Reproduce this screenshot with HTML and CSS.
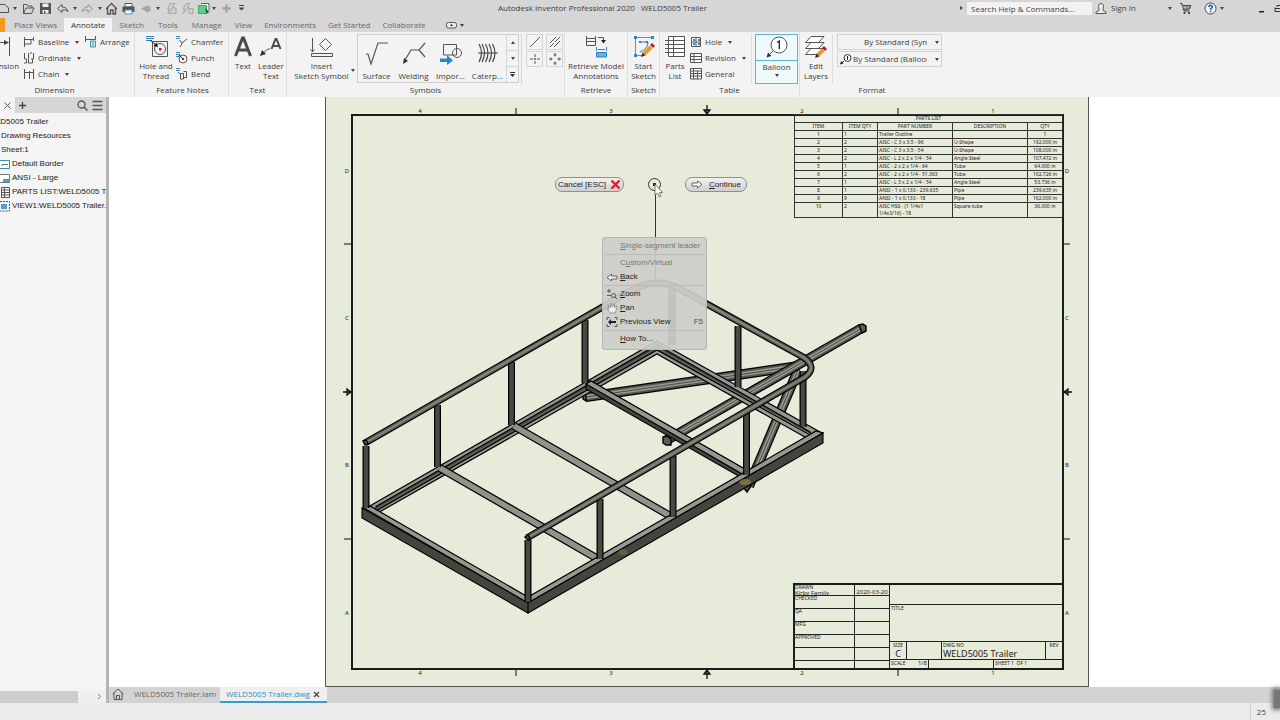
FILE: index.html
```html
<!DOCTYPE html>
<html lang="en">
<head>
<meta charset="utf-8">
<title>Autodesk Inventor Professional 2020</title>
<link rel="stylesheet" href="styles.css">
</head>
<body>
<header class="titlebar">
  <div class="quick">
    <button class="q q-new" aria-label="New"><svg width="10" height="14" viewBox="0 0 10 14"><path class="ln" d="M0 3.500H5L8.500 7V11.500H0"/></svg></button>
    <button class="q q-caret" aria-label="New options"><i class="caret"></i></button>
    <button class="q" aria-label="Open"><svg width="13" height="13" viewBox="0 0 13 13"><path class="ln" d="M1.500 11.500V2.500H5L6 4H10V6M1.500 11.500L4 6H12L9.500 11.500Z"/></svg></button>
    <button class="q" aria-label="Save"><svg width="13" height="13" viewBox="0 0 13 13"><path fill="#555" d="M1 1H12V12H1Z"/><path fill="#eee" d="M3.500 1.500H9.500V5H3.500ZM3.500 8H9.500V11.500H3.500Z"/><path fill="#555" d="M5 9H6.500V11.500H5Z"/></svg></button>
    <button class="q" aria-label="Undo"><svg width="13" height="13" viewBox="0 0 13 13"><path class="ln" d="M6 2.500L1.500 6.500L6 10.500V8Q10 7 12 9.500Q11 5 6 5Z"/></svg></button>
    <button class="q q-c8" aria-label="Undo options"><i class="caret"></i></button>
    <button class="q dim" aria-label="Redo"><svg width="13" height="13" viewBox="0 0 13 13"><path class="ln" d="M7 2.500L11.500 6.500L7 10.500V8Q3 7 1 9.500Q2 5 7 5Z"/></svg></button>
    <button class="q q-c7" aria-label="Redo options"><i class="caret"></i></button>
    <button class="q" aria-label="Home"><svg width="13" height="13" viewBox="0 0 13 13"><path class="ln" stroke-width="1.400" d="M1 7L6.500 1.500L12 7M2.500 6V12H5.500V8H8V12H10.500V6"/></svg></button>
    <button class="q" aria-label="Print"><svg width="13" height="13" viewBox="0 0 13 13"><path fill="#fff" stroke="#555" d="M3 1.500H10V5H3Z"/><path fill="#555" d="M.5 4.500H12.500V10H.5Z"/><path fill="#fff" stroke="#3d93c4" d="M3 8H10V12H3Z"/></svg></button>
    <button class="q dim" aria-label="Return"><svg width="13" height="13" viewBox="0 0 13 13"><path fill="#777" d="M2 7L5 5L9 3.500L11.500 5V9L8 10.500L5 8Z"/></svg></button>
    <button class="q q-c8" aria-label="Return options"><i class="caret"></i></button>
    <button class="q dim" aria-label="Update"><svg width="13" height="13" viewBox="0 0 13 13"><path fill="#ccc" stroke="#777" d="M6 1.500H11L8 5H10L4 11.500L5.500 7H3.500ZM5 11.500H12V6H10"/></svg></button>
    <button class="q dim" aria-label="Update all"><svg width="13" height="13" viewBox="0 0 13 13"><path fill="#ccc" stroke="#777" d="M5 1.500H9L6 5H8L2 11.500L4 7H2ZM8 6.500H12V11.500H8Z"/></svg></button>
    <button class="q q-sel" aria-label="Select"><svg width="13" height="13" viewBox="0 0 13 13"><path fill="#fff" stroke="#39734c" d="M4 1.500H12V9"/><path fill="#5fce86" stroke="#41a568" d="M1.500 3.500H9.500V11.500H1.500Z"/><path fill="#333" d="M8 6L12.500 10.500H10.500L10 12.500Z"/></svg></button>
    <button class="q q-c8" aria-label="Select options"><i class="caret"></i></button>
    <button class="q dim" aria-label="Add"><svg width="13" height="13" viewBox="0 0 13 13"><path stroke="#777" stroke-width="2.500" d="M6.500 2.500V10.500M2.500 6.500H10.500"/></svg></button>
    <button class="q q-more" aria-label="Customize"><svg width="7" height="7" viewBox="0 0 7 7"><path fill="#444" d="M1 0H6V1H1ZM.5 2.500H6.500L3.500 5.500Z"/></svg></button>
  </div>
  <h1 class="apptitle"><span>Autodesk Inventor Professional 2020</span><span>WELD5005 Trailer</span></h1>
  <div class="account">
    <i class="rcaret"></i>
    <input class="search" type="text" aria-label="Search" placeholder="Search Help &amp; Commands...">
    <button class="signin"><svg width="12" height="13" viewBox="0 0 12 13"><path fill="#eee" stroke="#555" d="M4 7Q2.500 2 6 1.500Q9.500 2 8 7V8.500L11 10V11.500H1V10L4 8.500Z"/></svg>Sign In</button>
    <button class="q q-acc" aria-label="Account options"><i class="caret"></i></button>
    <button class="q q-cart" aria-label="Store"><svg width="13" height="13" viewBox="0 0 13 13"><path fill="#999" stroke="#445" d="M1 1.500H3L5 9H10.500M3.500 3.500H12L10.500 7H4.500"/><path fill="#445" d="M4.500 10H6.500V12H4.500ZM9 10H11V12H9Z"/></svg></button>
    <button class="q q-help" aria-label="Help"><svg width="13" height="13" viewBox="0 0 13 13"><circle cx="6.500" cy="6.500" r="5.500" fill="#f4f6fa" stroke="#446"/><path fill="none" stroke="#2456a8" stroke-width="1.500" d="M4.700 5Q5 3.300 6.500 3.300Q8.300 3.400 8.300 5Q8 6 6.600 6.800V7.800M6.600 8.800V10.200"/></svg></button>
    <button class="q q-c8" aria-label="Help options"><i class="caret"></i></button>
    <button class="q q-min" aria-label="Minimize"><svg width="7" height="10" viewBox="0 0 7 10"><path fill="#222" d="M1 8H6V9.500H1Z"/></svg></button>
    <button class="q q-rest" aria-label="Restore"><svg width="6" height="10" viewBox="0 0 6 10"><path fill="none" stroke="#333" d="M1 5.500H6M1 4.500V8.500H6M3 4V2.500H6"/></svg></button>
  </div>
</header>

<nav class="tabs">
  <button class="file-tab" aria-label="File"></button>
  <button class="tab">Place Views</button>
  <button class="tab on">Annotate</button>
  <button class="tab">Sketch</button>
  <button class="tab">Tools</button>
  <button class="tab">Manage</button>
  <button class="tab slim">View</button>
  <button class="tab slim">Environments</button>
  <button class="tab slim">Get Started</button>
  <button class="tab slim">Collaborate</button>
  <button class="tab tab-min" aria-label="Minimize ribbon"><svg width="11" height="7" viewBox="0 0 11 7"><rect x=".5" y=".5" width="10" height="5.500" rx="2" fill="#eee" stroke="#555"/><path fill="#222" d="M4 4H7L5.500 2Z"/></svg><i class="caret"></i></button>
</nav>

<section class="ribbon">
  <div class="group g-dim">
    <div class="body">
      <button class="big b-dim"><svg width="36" height="25" viewBox="0 0 36 25"><path class="ln" d="M28.500 3V22M4.500 3V22M5 8.500H27"/><path fill="#444" d="M28 8.500L23 6V11Z"/></svg><span>Dimension</span></button>
      <div class="rows r-dim">
        <button class="row"><svg width="12" height="12" viewBox="0 0 12 12"><path class="ln" d="M1.500 1V11M1.500 3.500H11M1.500 8H8V3.500M10.500 1V5"/></svg><span>Baseline</span><i class="caret"></i></button>
        <button class="row"><svg width="12" height="12" viewBox="0 0 12 12"><path class="ln" d="M1.500 1V7H3.500V11H1M5.500 1V11H9.500V7M10.500 1V7H8M7 1H9"/></svg><span>Ordinate</span><i class="caret"></i></button>
        <button class="row"><svg width="12" height="12" viewBox="0 0 12 12"><path class="ln" d="M1.500 1V11M6.500 3V11M10.500 1V11M1.500 4.500H10.500"/></svg><span>Chain</span><i class="caret"></i></button>
      </div>
      <div class="rows">
        <button class="row"><svg width="13" height="12" viewBox="0 0 13 12"><path class="ln" d="M1.500 0V6M1.500 3.500H11.500V0"/><path fill="#d9eef5" stroke="#3a8fae" d="M6.500 5H11.500V11H6.500Z"/><path stroke="#3a8fae" d="M8 7H10M8 9H10"/></svg><span>Arrange</span></button>
      </div>
    </div>
    <h2>Dimension</h2>
  </div>
  <div class="group g-feat">
    <div class="body">
      <button class="big b-hole"><svg width="25" height="25" viewBox="0 0 25 25"><path stroke="#2f86bd" d="M2 2.500H10M2 4.500H10M2 6.500H8"/><path class="ln" d="M8.500 7.500H23.500V22.500H8.500Z"/><circle class="ln" cx="16" cy="15" r="5.500"/><path fill="#c11" d="M15 14H17.500V16.500H15Z"/><path stroke="#222" d="M6 6L13 12"/><path fill="#111" d="M14 13L9.500 12L12.500 8.500Z"/></svg><span>Hole and Thread</span></button>
      <div class="rows">
        <button class="row"><svg width="13" height="12" viewBox="0 0 13 12"><path stroke="#2f86bd" d="M1 .5H5M1 2.500H5"/><path class="ln" d="M4.500 4L7 7M5 11L8 6L12 3"/></svg><span>Chamfer</span></button>
        <button class="row"><svg width="13" height="12" viewBox="0 0 13 12"><path stroke="#2f86bd" d="M1 .5H5M1 2.500H5M1 4.500H4"/><circle class="ln" cx="8" cy="7" r="4"/><path stroke="#222" d="M4 3L7 6"/><path fill="#c11" d="M7 6H9V8H7Z"/></svg><span>Punch</span></button>
        <button class="row"><svg width="13" height="12" viewBox="0 0 13 12"><path stroke="#2f86bd" d="M1 .5H5M1 2.500H5"/><path class="ln" d="M5.500 5.500H8.500V11H5.500ZM8.500 3.500H11.500V9.500H8.500M3 4L6 7"/></svg><span>Bend</span></button>
      </div>
    </div>
    <h2>Feature Notes</h2>
  </div>
  <div class="group g-text">
    <div class="body">
      <button class="big b-text"><svg width="20" height="25" viewBox="0 0 20 25"><path fill="none" stroke="#4a4a4a" stroke-width="3" d="M2.500 22L9.500 4H10.500L17.500 22M5.500 16H14.500"/></svg><span>Text</span></button>
      <button class="big b-lead"><svg width="24" height="25" viewBox="0 0 24 25"><path fill="none" stroke="#4a4a4a" stroke-width="2" d="M12.500 15L16.500 5H17.500L21.500 15M14 12H20"/><path class="ln" d="M3 20L9 15H11"/><path fill="#333" d="M1 22L3 16L7 20Z"/></svg><span>Leader Text</span></button>
    </div>
    <h2>Text</h2>
  </div>
  <div class="group g-sym">
    <div class="body">
      <button class="big b-ins"><svg width="26" height="25" viewBox="0 0 26 25"><path class="ln" d="M3.500 4V18M1.500 15.500L3.500 18L5.500 15.500M2.500 19.500H23.500V22.500H2.500ZM16.500 4.500L22.500 10.500L16.500 16.500L10.500 10.500Z"/></svg><span>Insert<br>Sketch Symbol</span><i class="caret"></i></button>
      <div class="gallery">
        <button class="gi"><svg width="24" height="26" viewBox="0 0 24 26"><path fill="none" stroke="#555" stroke-width="1.200" d="M1 14H3L6 24L13 3H23"/></svg><span>Surface</span></button>
        <button class="gi"><svg width="24" height="26" viewBox="0 0 24 26"><path fill="none" stroke="#555" stroke-width="1.200" d="M3 20L9 10H17L23 3M17 10L23 17"/><path fill="#333" d="M1 24L2 18L6 21Z"/></svg><span>Welding</span></button>
        <button class="gi"><svg width="24" height="26" viewBox="0 0 24 26"><path class="ln" d="M4.500 4.500H17.500V15H4.500Z"/><circle class="ln" cx="18" cy="13" r="4.500"/><path fill="#2688cf" d="M1 18.500H8V15L14 20.500L8 25V22H1Z"/></svg><span>Impor...</span></button>
        <button class="gi"><svg width="24" height="26" viewBox="0 0 24 26"><path fill="none" stroke="#444" stroke-width="1.200" d="M3 4Q8 13 3 22M6 4Q11 13 6 22M9.500 4Q14.500 13 9.500 22M13 4Q18 13 13 22M16.500 4Q21.500 13 16.500 22M2 13H22"/></svg><span>Caterp...</span></button>
        <div class="gscroll">
          <button aria-label="Up"><i class="caret up"></i></button>
          <button aria-label="Down"><i class="caret"></i></button>
          <button aria-label="More"><svg width="5" height="5" viewBox="0 0 5 5"><path fill="#333" d="M0 0H5V1H0ZM0 2H5L2.500 5Z"/></svg></button>
        </div>
      </div>
      <div class="marks">
        <button aria-label="Centerline"><svg width="12" height="12" viewBox="0 0 12 12"><path class="ln" d="M1 11L11 1"/></svg></button>
        <button aria-label="Bisector"><svg width="12" height="12" viewBox="0 0 12 12"><path class="ln" d="M1 7L7 1M1 11L5 7M6 6L11 1M5 11L11 5"/></svg></button>
        <button aria-label="Center mark"><svg width="12" height="12" viewBox="0 0 12 12"><path class="ln" d="M6 1V4M6 5V7M6 8V11M1 6H4M5 6H7M8 6H11"/></svg></button>
        <button aria-label="Centered pattern"><svg width="12" height="12" viewBox="0 0 12 12"><path class="ln" d="M6 0V3.500M4.500 2H7.500M6 8.500V12M4.500 10H7.500M2 4.500V7.500M0 6H3.500M10 4.500V7.500M8.500 6H12"/></svg></button>
      </div>
    </div>
    <h2>Symbols</h2>
  </div>
  <div class="group g-ret">
    <div class="body">
      <button class="big"><svg width="24" height="25" viewBox="0 0 24 25"><path class="ln" d="M2.500 2V11.500H11.500V2M2 7.500H12M3 4.500H11M14 3.500H19.500V7"/><path fill="#222" d="M17 6H22L19.500 9.500Z"/><path fill="#67b1df" stroke="#2783bd" d="M12.500 18.500H22.500V23H12.500ZM12.500 13V17M22.500 13V17M14 15.500H21"/></svg><span>Retrieve Model Annotations</span></button>
    </div>
    <h2>Retrieve</h2>
  </div>
  <div class="group g-sk">
    <div class="body">
      <button class="big"><svg width="24" height="25" viewBox="0 0 24 25"><path fill="none" stroke="#888" d="M3.500 4V20M4 3.500H19M4 21.500H10"/><path fill="#2688cf" d="M2 2H5V5H2ZM19 2H22V5H19ZM2 20H5V23H2ZM7 7H9V9H7ZM14 7H16V9H14Z"/><path fill="none" stroke="#3477a2" d="M8 8H16Q16 15 8 18"/><path stroke="#e99a28" stroke-width="4" d="M12 20L19 13"/><path fill="#b22" d="M18 11L21 14L23 12L20 9Z"/><path fill="#333" d="M9 23L10.500 18.500L13.500 21.500Z"/></svg><span>Start Sketch</span></button>
    </div>
    <h2>Sketch</h2>
  </div>
  <div class="group g-tab">
    <div class="body">
      <button class="big b-parts"><svg width="22" height="25" viewBox="0 0 22 25"><path class="ln" fill="#fff" d="M4.500 2.500H20.500V22.500H4.500ZM4.500 6.500H20.500M4.500 10.500H20.500M4.500 14.500H20.500M4.500 18.500H20.500M9.500 2.500V22.500M1 6.500H4M1 10.500H4M1 14.500H4M1 18.500H4"/></svg><span>Parts List</span></button>
      <div class="rows">
        <button class="row"><svg width="12" height="12" viewBox="0 0 12 12"><path class="ln" fill="#fff" d="M1.500 1.500H10.500V10.500H1.500ZM1.500 6H10.500M6 1.500V10.500"/><path fill="#2f86bd" d="M3 3H5V5H3ZM8 3H10V5H8ZM3 7H5V9H3ZM8 7H10V9H8Z"/></svg><span>Hole</span><i class="caret"></i></button>
        <button class="row"><svg width="12" height="12" viewBox="0 0 12 12"><path class="ln" fill="#fff" d="M.5 1.500H11.500V10.500H.5ZM.5 4.500H11.500M.5 7.500H11.500M4 1.500V10.500"/></svg><span>Revision</span><i class="caret"></i></button>
        <button class="row"><svg width="12" height="12" viewBox="0 0 12 12"><path class="ln" fill="#fff" d="M.5 .5H11.500V11H.5ZM.5 3H11.500M.5 5.500H11.500M.5 8H11.500M3.500 .5V11M7.500 3V11"/></svg><span>General</span></button>
      </div>
      <button class="balloon"><span class="bic"><svg width="24" height="24" viewBox="0 0 24 24"><circle cx="14" cy="10" r="8" fill="#fff" stroke="#555"/><path fill="none" stroke="#333" stroke-width="1.400" d="M12 7.500L14.300 6V14"/><path stroke="#555" d="M8 16L4 20"/><path fill="#333" d="M1.500 22.500L3 17.500L6.500 21Z"/></svg></span><span>Balloon</span><i class="caret"></i></button>
    </div>
    <h2>Table</h2>
  </div>
  <div class="group g-fmt">
    <div class="body">
      <button class="big b-edit"><svg width="24" height="25" viewBox="0 0 24 25"><path class="ln" fill="#fff" d="M1.500 20.500L7 14.500H20L14.500 20.500ZM1.500 14.500L7 8.500H20L14.500 14.500ZM1.500 8.500L7 2.500H20L14.500 8.500Z"/><path stroke="#e99a28" stroke-width="4" d="M14 21L19 16"/><path fill="#b22" d="M18 14L21 17L23 15L20 12Z"/><path fill="#333" d="M11 24L12.500 19.500L15.500 22.500Z"/></svg><span>Edit Layers</span></button>
      <div class="styles">
        <label class="pick p-one"><select aria-label="Object style"><option>By Standard (Symbol)</option></select><i class="caret"></i></label>
        <label class="pick p-two"><svg width="12" height="12" viewBox="0 0 12 12"><circle cx="7.500" cy="5" r="3.500" fill="#fff" stroke="#333"/><path stroke="#222" d="M7.500 3V7M4 8L2 10"/><path fill="#222" d="M0 11.500L1 8L3.500 10.500Z"/></svg><select aria-label="Layer style"><option>By Standard (Balloon)</option></select><i class="caret"></i></label>
      </div>
    </div>
    <h2>Format</h2>
  </div>
</section>

<div class="work">
  <aside class="browser">
    <div class="bhead">
      <button class="btab" aria-label="Close panel"><svg width="9" height="9" viewBox="0 0 9 9"><path stroke="#555" d="M1.500 1.500L7.500 7.500M7.500 1.500L1.500 7.500"/></svg></button>
      <button class="badd" aria-label="Add panel"><svg width="9" height="9" viewBox="0 0 9 9"><path stroke="#444" stroke-width="1.300" d="M4.500 1V8M1 4.500H8"/></svg></button>
      <button class="bicon" aria-label="Find"><svg width="11" height="11" viewBox="0 0 11 11"><circle cx="4.500" cy="4.500" r="3.500" fill="none" stroke="#555" stroke-width="1.300"/><path stroke="#555" stroke-width="1.500" d="M7 7L10.500 10.500"/></svg></button>
      <button class="bicon" aria-label="Panel menu"><svg width="11" height="11" viewBox="0 0 11 11"><path stroke="#555" stroke-width="1.300" d="M.5 1.500H10.500M.5 5.500H10.500M.5 9.500H10.500"/></svg></button>
    </div>
    <ul class="tree">
      <li class="t0">WELD5005 Trailer</li>
      <li>Drawing Resources</li>
      <li>Sheet:1</li>
      <li><svg width="11" height="11" viewBox="0 0 11 11"><path fill="#fff" stroke="#3a8fae" d="M-1 1.500H9.500V9.500H-1"/><path fill="none" stroke="#777" d="M2 7V5.500H8"/></svg>Default Border</li>
      <li><svg width="11" height="11" viewBox="0 0 11 11"><path fill="#fff" stroke="#777" d="M-1 1.500H9.500V9.500H-1"/><path fill="#4c9fd0" d="M3 6H9V9H3Z"/></svg>ANSI - Large</li>
      <li><svg width="11" height="11" viewBox="0 0 11 11"><path class="ln" fill="#fff" d="M1.500 .5H9.500V10.500H1.500ZM1.500 3H9.500M1.500 5.500H9.500M1.500 8H9.500M4.500 .5V10.500"/></svg>PARTS LIST:WELD5005 Trailer</li>
      <li><svg width="11" height="11" viewBox="0 0 11 11"><path fill="none" stroke="#555" stroke-dasharray="2 1" d="M0 .5H9.500V10H0"/><path fill="#4c9fd0" d="M1 3H7V8H1Z"/></svg>VIEW1:WELD5005 Trailer.iam</li>
    </ul>
    <div class="hbar"><i class="thumb"></i><span class="harrow"><svg width="5" height="7" viewBox="0 0 5 7"><path fill="none" stroke="#777" d="M1 1L3.500 3.500L1 6"/></svg></span></div>
  </aside>

  <main class="view">
    <div class="canvas">
      <div class="sheet">
        <svg class="drawing" viewBox="326 97 762 589">
          <defs>
            <path id="pipe" d="M365 443L634 289Q656 278 676 287L803 357Q818 367 805 377L527 538"/>
            <path id="tongue" d="M667 440L862 328"/>
            <path id="brace1" d="M586 397L799 366"/>
            <path id="brace2" d="M749 486L798 370"/>
            <path id="posts" d="M366 446V508M437.500 405V467M511.500 362V425M585 320V383M672 289V345M738 326V387M803 371V427M528 540V602M600 499V559M673 456V517M746.500 413V475"/>
            <path id="cross" d="M440 468L598 559M514 426L672 517"/>
          </defs>
          <g class="zone">
            <path d="M516 108V114M898 108V114M516 670V676M898 670V676M344 244H351M344 539H351M1064 244H1070M1064 539H1070"/>
            <path class="arr" d="M707 105V114M704 110L707 114L710 110ZM707 679V670M704 674L707 670L710 674ZM343 392H351M347 389L351 392L347 395ZM1072 392H1064M1068 389L1064 392L1068 395Z"/>
            <g text-anchor="middle">
              <text x="420" y="113">4</text><text x="611" y="113">3</text><text x="802" y="113">2</text><text x="993" y="113">1</text>
              <text x="420" y="675">4</text><text x="611" y="675">3</text><text x="802" y="675">2</text><text x="993" y="675">1</text>
              <text x="347" y="173">D</text><text x="347" y="320">C</text><text x="347" y="467">B</text><text x="347" y="615">A</text>
              <text x="1067" y="173">D</text><text x="1067" y="320">C</text><text x="1067" y="467">B</text><text x="1067" y="615">A</text>
            </g>
          </g>
          <g fill="none">
            <use href="#brace1" class="k10"/><use href="#brace1" class="dark8"/><use href="#brace1" class="hi3"/><use href="#brace1" class="k1"/>
            <use href="#brace2" class="k10"/><use href="#brace2" class="dark8"/><use href="#brace2" class="hi3"/><use href="#brace2" class="k1"/>
            <use href="#tongue" class="k10"/><use href="#tongue" class="dark8"/><use href="#tongue" class="hi3"/><use href="#tongue" class="k1"/>
          </g>
          <path class="cap" d="M663 437L667 436L671 439V445L666 445L663 443ZM859 325L863 324L866 326V331L862 333ZM743 487L749 484L751 486L747 492ZM583 393L586 396V401L583 399Z"/>
          <path class="lit" d="M368 507L657 341L822 433L812 441L657 354L376 514Z"/>
          <path class="dk" d="M376 506.500L657 345L810 432L812 436L657 350L376 511Z"/>
          <path class="edge" d="M376 509L657 348L812 435"/>
          <path class="dk" d="M586 384L590 381L748 471V480L742 478L586 389Z"/>
          <path class="lit" d="M586 384L591 381L750 472L744 475Z"/>
          <g fill="none"><use href="#cross" class="k9"/><use href="#cross" class="lite6"/></g>
          <path class="lit" d="M364 508L370 506L528 597L816 431L823 433L528 603Z"/>
          <path class="dk" d="M362 508L528 603V613L362 518ZM528 603L823 433V443L528 613Z"/>
          <ellipse class="glow" cx="745" cy="482" rx="6" ry="3"/><ellipse class="glow g2" cx="623" cy="552" rx="5" ry="3"/>
          <g fill="none">
            <use href="#posts" class="k8"/><use href="#posts" class="post5"/>
            <use href="#pipe" class="k8"/><use href="#pipe" class="pipe5"/><use href="#pipe" class="hi2"/>
          </g>
          <path class="cap" d="M363 441L366 440L368 443L365 445ZM525 537L528 535L530 538L528 540Z"/>
          <path class="leader" d="M655.500 186V280"/>
          <circle class="leader" cx="654.500" cy="184.500" r="6"/>
          <path fill="#333" d="M653 183H656V186H653Z"/>
          <path fill="#fff" stroke="#444" stroke-width=".7" d="M655 184V195L657.500 193L659.500 197L661 196L659.500 192.500H662.500Z"/>
        </svg>
        <div class="frame">
          <table class="parts">
            <colgroup><col class="c1"><col class="c2"><col class="c3"><col class="c4"><col class="c5"></colgroup>
            <thead>
              <tr><th colspan="5">PARTS LIST</th></tr>
              <tr><th>ITEM</th><th>ITEM QTY</th><th>PART NUMBER</th><th>DESCRIPTION</th><th>QTY</th></tr>
            </thead>
            <tbody>
              <tr><td>1</td><td>1</td><td>Trailer Outline</td><td></td><td>1</td></tr>
              <tr><td>2</td><td>2</td><td>AISC - C 3 x 3.5 - 96</td><td>U-Shape</td><td>192.000 in</td></tr>
              <tr><td>3</td><td>2</td><td>AISC - C 3 x 3.5 - 54</td><td>U-Shape</td><td>108.000 in</td></tr>
              <tr><td>4</td><td>2</td><td>AISC - L 2 x 2 x 1/4 - 54</td><td>Angle Steel</td><td>107.472 in</td></tr>
              <tr><td>5</td><td>1</td><td>AISC - 2 x 2 x 1/4 - 64</td><td>Tube</td><td>64.000 in</td></tr>
              <tr><td>6</td><td>2</td><td>AISC - 2 x 2 x 1/4 - 51.363</td><td>Tube</td><td>102.726 in</td></tr>
              <tr><td>7</td><td>1</td><td>AISC - L 3 x 2 x 1/4 - 54</td><td>Angle Steel</td><td>53.736 in</td></tr>
              <tr><td>8</td><td>1</td><td>ANSI - 1 x 0.133 - 239.635</td><td>Pipe</td><td>239.635 in</td></tr>
              <tr><td>9</td><td>9</td><td>ANSI - 1 x 0.133 - 18</td><td>Pipe</td><td>162.000 in</td></tr>
              <tr><td>10</td><td>2</td><td>AISC HSS - (1 1/4x1<br>1/4x3/16) - 18</td><td>Square tube</td><td>36.000 in</td></tr>
            </tbody>
          </table>
          <div class="block">
            <div class="signs">
              <div class="sign">DRAWN<b>Kirby Family</b></div><div class="sign date"><b>2020-03-20</b></div>
              <div class="sign">CHECKED</div><div class="sign"></div>
              <div class="sign">QA</div><div class="sign"></div>
              <div class="sign">MFG</div><div class="sign"></div>
              <div class="sign">APPROVED</div><div class="sign"></div>
              <div class="sign"></div><div class="sign"></div>
              <div class="sign"></div><div class="sign"></div>
            </div>
            <div class="info">
              <div class="cell blank"></div>
              <div class="cell ttl">TITLE</div>
              <div class="line l-size">
                <div class="cell sz">SIZE<b>C</b></div><div class="cell code"></div>
                <div class="cell dwg">DWG NO<b>WELD5005 Trailer</b></div><div class="cell rev">REV</div>
              </div>
              <div class="line l-scale">
                <div class="cell scale"><span>SCALE</span><span>1/8</span></div><div class="cell mid"></div><div class="cell sheetno">SHEET 1&nbsp; OF 1</div>
              </div>
            </div>
          </div>
        </div>
        <button class="pill cancel">Cancel [ESC]<svg width="11" height="11" viewBox="0 0 11 11"><path stroke="#d8202c" stroke-width="2.400" d="M1.500 1.500L9.500 9.500M9.500 1.500L1.500 9.500"/></svg></button>
        <button class="pill cont"><svg width="12" height="9" viewBox="0 0 12 9"><path fill="#fff" stroke="#666" d="M1 3H6.500V1L11 4.500L6.500 8V6H1Z"/></svg><span><u>C</u>ontinue</span></button>
        <div class="menu">
          <button class="mi off"><span><u>S</u>ingle-segment leader</span></button>
          <hr>
          <button class="mi off"><span>C<u>u</u>stom/Virtual</span></button>
          <button class="mi"><svg width="12" height="9" viewBox="0 0 12 9"><path fill="#eee" stroke="#666" d="M11 3H5.500V1L1 4.500L5.500 8V6H11Z"/></svg><span><u>B</u>ack</span></button>
          <hr>
          <button class="mi"><svg width="12" height="12" viewBox="0 0 12 12"><path class="ln" d="M3 1V5M1 3H5M1 7.500H5"/><circle class="ln" cx="7.500" cy="7.500" r="2"/><path class="ln" d="M9 9L11 11"/></svg><span><u>Z</u>oom</span></button>
          <button class="mi"><svg width="12" height="12" viewBox="0 0 12 12"><path fill="#eee" stroke="#888" stroke-width=".8" d="M4 11L1 6.500L3 7L2 2.500L4.500 5.500L5 1L6.500 5L8.500 1.500V5.500L11 4L9.500 11Z"/></svg><span><u>P</u>an</span></button>
          <button class="mi"><svg width="12" height="12" viewBox="0 0 12 12"><path class="ln" d="M3.500 1.500H1V4M8.500 1.500H11V4M3.500 10.500H1V8M8.500 10.500H11V8"/><path fill="#222" d="M2 6L5 3V5H10V7H5V9Z"/></svg><span>Previous View</span><kbd>F5</kbd></button>
          <hr>
          <button class="mi"><span><u>H</u>ow To...</span></button>
        </div>
      </div>
    </div>
    <nav class="docs">
      <button class="dhome" aria-label="Home"><svg width="12" height="12" viewBox="0 0 12 12"><path class="ln" d="M.5 6L6 1L11.500 6M2 5V11.500H10V5M4.500 11V7.500H7.500V11"/></svg></button>
      <button class="doc">WELD5005 Trailer.iam</button>
      <button class="doc on">WELD5005 Trailer.dwg<svg width="7" height="7" viewBox="0 0 7 7"><path stroke="#444" stroke-width="1.200" d="M1 1L6 6M6 1L1 6"/></svg></button>
    </nav>
  </main>
</div>
<footer class="status"><span>25</span><i class="grip"></i></footer>
</body>
</html>
```
FILE: styles.css
```css
* { box-sizing: border-box; }
body {
  margin: 0; height: 100vh; display: flex; flex-direction: column; overflow: hidden;
  font: 8px/10px "Open Sans", "Noto Sans", sans-serif; color: #3c3c3c; background: #ebebeb;
}
button { font: inherit; color: inherit; background: none; border: 0; padding: 0; margin: 0; white-space: nowrap; }
svg { display: block; flex: none; overflow: visible; }
h1, h2 { margin: 0; font: inherit; }
.ln { fill: none; stroke: #555; }
path.ln[fill="#fff"] { fill: #fff; }
.caret { display: block; flex: none; width: 0; height: 0; border: 2px solid transparent; border-top: 3px solid #444; border-bottom: 0; }
.caret.up { border-top: 0; border-bottom: 3px solid #444; }

.titlebar { display: flex; height: 16px; flex: none; background: #d6d6d6; align-items: center; }
.quick, .account { display: flex; height: 16px; align-items: center; }
.q { width: 17px; height: 16px; flex: none; display: flex; align-items: center; justify-content: center; }
.q-new { width: 10px; justify-content: flex-start; }
.q-caret { width: 10px; }
.q-c8 { width: 8px; }
.q-c7 { width: 7px; }
.q-sel { width: 14px; }
.q-more { width: 12px; }
.dim { opacity: .5; }
.apptitle { flex: 1; display: flex; justify-content: center; gap: 6px; padding-right: 2px; white-space: nowrap; }
.rcaret { border: 2px solid transparent; border-left: 3px solid #444; border-right: 0; margin: 0 4px 0 0; }
.search { width: 125px; height: 13px; border: 0; background: #f2f2f2; font: inherit; padding: 0 4px; color: #444; }
.search::placeholder { color: #444; opacity: 1; }
.signin { display: flex; align-items: center; gap: 4px; margin-left: 3px; width: 71px; }
.q-acc { width: 8px; }
.q-cart { width: 23px; }
.q-help { width: 21px; padding-left: 5px; }
.q-min { margin-left: 27px; }
.q-rest { width: 10px; justify-content: flex-end; }

.tabs { display: flex; height: 16px; flex: none; background: #d6d6d6; align-items: flex-end; color: #666; }
.file-tab { width: 5px; height: 14px; background: #f29a1f; margin-right: 2px; }
.tab { height: 14px; padding: 0 7px; }
.tab.slim { padding: 0 6px; }
.tab.on { background: #f3f3f3; color: #333; }
.tab-min { display: flex; align-items: center; gap: 3px; padding-left: 14px; }

.ribbon { display: flex; flex: none; height: 65px; background: #f3f3f3; overflow: hidden; }
.group { flex: none; display: flex; flex-direction: column; border-right: 1px solid #dedede; }
.group h2 { text-align: center; line-height: 12px; }
.body { display: flex; height: 52px; padding-top: 2px; }
.big { display: flex; flex-direction: column; align-items: center; white-space: normal; width: 100%; position: relative; }
.big span { margin-top: 2px; }
.big > .caret { position: absolute; right: 1px; bottom: 12px; }
.rows { display: flex; flex-direction: column; }
.row { display: flex; align-items: center; gap: 3px; height: 16px; }
.row .caret { margin-left: 3px; }
.g-dim { width: 160px; margin-left: -25px; }
.b-dim { width: 48px; flex: none; }
.r-dim { width: 61px; }
.g-feat { width: 94px; padding-left: 2px; }
.b-hole { width: 38px; flex: none; }
.g-text { width: 58px; }
.b-text { width: 28px; flex: none; }
.b-lead { width: 28px; }
.g-sym { width: 278px; }
.b-ins { width: 69px; flex: none; }
.gallery { display: flex; border: 1px solid #cfcfcf; height: 49px; width: 162px; margin-left: 1px; }
.gi { width: 37px; display: flex; flex-direction: column; align-items: center; padding-top: 5px; }
.gi span { margin-top: 5px; }
.gscroll { width: 12px; border-left: 1px solid #d5d5d5; display: flex; flex-direction: column; }
.gscroll button { flex: 1; display: flex; align-items: center; justify-content: center; }
.gscroll button + button { border-top: 1px solid #d5d5d5; }
.marks { display: grid; grid-template-columns: 17px 17px; grid-auto-rows: 16px; gap: 1px 3px; border-left: 1px solid #d5d5d5; padding-left: 4px; margin-left: 2px; }
.marks button { border: 1px solid #d5d5d5; display: flex; align-items: center; justify-content: center; }
.g-ret { width: 63px; }
.g-sk { width: 32px; }
.g-tab { width: 140px; }
.b-parts { width: 30px; flex: none; }
.g-tab .rows { width: 62px; border-right: 1px solid #dedede; }
.balloon { width: 43px; margin-left: 3px; border: 1px solid #5fb3cd; background: #eef9fc; display: flex; flex-direction: column; align-items: center; }
.bic { width: 100%; display: flex; justify-content: center; border-bottom: 1px solid #5fb3cd; height: 26px; margin-bottom: 1px; }
.balloon .caret { margin-top: 2px; }
.g-fmt { width: 144px; border: 0; }
.b-edit { width: 32px; flex: none; }
.styles { display: flex; flex-direction: column; gap: 1px; border-left: 1px solid #dedede; padding-left: 4px; }
.pick { display: flex; align-items: center; position: relative; width: 105px; height: 16px; border: 1px solid #d2d2d2; }
.pick select { appearance: none; border: 0; background: none; font: inherit; color: inherit; padding: 0; width: 63px; }
.p-one { padding-left: 26px; }
.p-two { padding-left: 2px; }
.p-two select { width: 75px; padding-left: 1px; }
.pick .caret { position: absolute; right: 2px; }

.work { flex: 1; display: flex; min-height: 0; background: #fff; }
.browser, .pill, .menu { font-family: "Liberation Sans", Arial, sans-serif; color: #222; }
.browser { width: 109px; flex: none; border-right: 3px solid #b4b4b4; background: #f4f4f4; display: flex; flex-direction: column; }
.bhead { display: flex; align-items: center; height: 16px; background: #d6d6d6; flex: none; }
.btab { width: 15px; height: 16px; background: #f4f4f4; display: grid; place-items: center; }
.badd { width: 14px; display: grid; place-items: center; margin-right: auto; }
.bicon { width: 15px; display: grid; place-items: center; }
.bicon:last-child { margin-right: 1px; }
.tree { list-style: none; margin: 0; padding: 2px 0 0; flex: 1; overflow: hidden; }
.tree li { height: 14px; display: flex; align-items: center; white-space: nowrap; gap: 1px; padding-left: 1px; }
.tree li:has(svg) { padding-left: 0; }
.tree .t0 { margin-left: -18px; }
.hbar { display: flex; height: 12px; justify-content: space-between; background: #efefef; align-items: stretch; }
.thumb { width: 78px; background: #cdcdcd; }
.harrow { padding: 2px 4px; }

.view { flex: 1; display: flex; flex-direction: column; min-width: 0; }
.canvas { flex: 1; display: grid; grid-template-columns: 216fr 764fr 191fr; min-height: 0; }
.sheet { grid-column: 2; position: relative; background: #e7ebd9; border: 1px solid #555; border-top: 0; padding: 17px 24px 16px 25px; display: flex; }
.drawing { position: absolute; inset: 0; width: 100%; height: 100%; }
.frame { flex: 1; border: 2px solid #1c1c1c; display: flex; flex-direction: column; justify-content: space-between; align-items: flex-end; font: 5px/7px "Noto Sans", sans-serif; color: #222; }
.zone text { font: 6px "Noto Sans", sans-serif; fill: #222; }
.zone path { stroke: #111; stroke-width: 1; fill: none; }
.zone .arr { fill: none; stroke-width: 1.3; }
.k10 { stroke: #000; stroke-width: 10; }
.k9 { stroke: #000; stroke-width: 8; }
.k8 { stroke: #000; stroke-width: 7; }
.k1 { stroke: #333; stroke-width: .8; }
.dark8 { stroke: #55554f; stroke-width: 7.500; }
.hi3 { stroke: #9a9a93; stroke-width: 4; }
.lite6 { stroke: #92928d; stroke-width: 5.500; }
.post5 { stroke: #484844; stroke-width: 4.500; }
.pipe5 { stroke: #5b5b55; stroke-width: 4.600; }
.hi2 { stroke: #85857d; stroke-width: 2; }
.lit { fill: #979791; stroke: #000; stroke-width: 1.2; }
.dk { fill: #45443f; stroke: #000; stroke-width: 1.1; }
.edge { fill: none; stroke: #70706a; }
.cap { fill: #5c5c56; stroke: #000; stroke-width: 1.4; }
.glow { fill: #b39a45; opacity: .5; }
.g2 { opacity: .3; }
.leader { fill: none; stroke: #333; }

.parts { border-collapse: collapse; table-layout: fixed; width: 268px; margin: -2px -1px 0 0; }
.parts td, .parts th { border: 1px solid #333; padding: 0 1px; height: 8px; line-height: 7px; font-weight: normal; text-align: left; white-space: nowrap; vertical-align: top; }
.parts th, .parts td:first-child, .parts td:last-child { text-align: center; }
.c1 { width: 48px; } .c2 { width: 35px; } .c3 { width: 75px; } .c4 { width: 75px; } .c5 { width: 35px; }

.block { display: flex; width: 269px; height: 85px; border: 2px solid #1c1c1c; border-width: 2px 0 0 2px; line-height: 5px; }
.block b { display: block; font-weight: normal; font-size: 6px; line-height: 6px; }
.signs { display: grid; grid-template-columns: 60px 35px; grid-template-rows: 11px repeat(5, 13px) 1fr; width: 95px; flex: none; }
.sign { border-right: 1px solid #222; border-bottom: 1px solid #222; min-height: 0; white-space: nowrap; }
.sign:nth-last-child(-n+2) { border-bottom: 0; }
.date { display: flex; align-items: flex-end; justify-content: center; }
.info { flex: 1; display: flex; flex-direction: column; }
.cell { padding: 1px; white-space: nowrap; border-right: 1px solid #222; }
.cell:last-child, .blank, .ttl { border-right: 0; }
.blank { height: 20px; border-bottom: 1px solid #222; }
.ttl { flex: 1; border-bottom: 1px solid #222; }
.line { display: flex; }
.l-size { height: 18px; border-bottom: 1px solid #222; }
.l-scale { height: 8px; }
.sz { width: 17px; text-align: center; }
.sz b, .dwg b { font-size: 9px; line-height: 11px; }
.code { width: 35px; }
.dwg { width: 104px; }
.rev { flex: 1; text-align: center; }
.scale { width: 39px; display: flex; justify-content: space-between; }
.scale span + span { font-size: 6px; }
.mid { width: 65px; }

.pill { position: absolute; top: 80px; height: 15px; border: 1px solid #8f8f8f; border-radius: 7px; background: linear-gradient(#f2f2f2, #cfcfcf); display: flex; align-items: center; justify-content: center; }
.cancel { left: 229px; width: 69px; gap: 4px; }
.cont { left: 359px; width: 62px; gap: 6px; }
.menu { position: absolute; left: 276px; top: 140px; width: 105px; padding: 1px 1px 3px; border: 1px solid #b5b5b5; border-radius: 3px; background: rgba(204, 205, 200, .93); }
.menu hr { border: 0; border-top: 1px solid #bbb; margin: 1px 0; }
.mi { display: flex; align-items: center; width: 100%; height: 14px; padding: 0 2px 0 16px; position: relative; }
.mi svg { position: absolute; left: 2px; }
.mi kbd { font: inherit; margin-left: auto; color: #555; }
.off { color: #777; }

.docs { display: flex; height: 16px; flex: none; background: #d3d3d3; color: #666; }
.dhome { width: 17px; display: grid; place-items: center; padding-bottom: 2px; }
.doc { padding: 0 4px 2px 8px; height: 16px; display: flex; align-items: center; gap: 3px; }
.doc.on { background: #efefef; color: #2a8fbd; border-bottom: 2px solid #389dc9; padding: 0 7px 0 6px; }
.status { height: 17px; flex: none; display: flex; align-items: center; justify-content: flex-end; padding-right: 14px; position: relative; }
.status span { border-left: 1px solid #d0d0d0; padding-left: 6px; line-height: 17px; }
.grip { position: absolute; right: 0; bottom: 12px; width: 6px; height: 18px; background: #777; box-shadow: 0 0 4px 2px #777; }
```
